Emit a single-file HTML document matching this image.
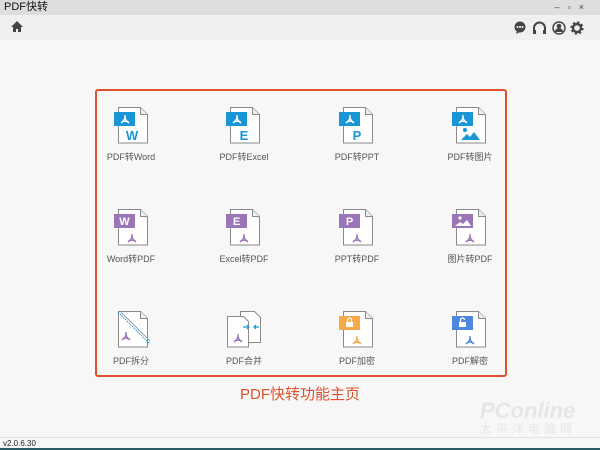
<!DOCTYPE html><html><head><meta charset="utf-8"><style>
*{margin:0;padding:0;box-sizing:border-box}
body{width:600px;height:450px;overflow:hidden;background:#f7f7f7;font-family:"Liberation Sans","Noto Sans CJK SC",sans-serif;position:relative}
.t{position:absolute;left:0;top:0;width:600px;height:15px;background:#dedede;font-size:11px;line-height:15px;padding-left:4px;color:#111}
.tb{position:absolute;left:0;top:15px;width:600px;height:25px;background:#f0f0f0}
.box{position:absolute;left:95px;top:89px;width:412px;height:288px;border:2px solid #e0502a;border-radius:3px}
.cap{position:absolute;left:0;width:600px;top:383px;text-align:center;color:#e0502a;font-size:15px}
.ic{position:absolute;width:40px;height:40px}
.lb{position:absolute;width:120px;text-align:center;font-size:9px;color:#555}
.st{position:absolute;left:0;top:437px;width:600px;height:13px;border-top:1px solid #e2e2e2;font-size:8px;color:#222;padding-left:3px;line-height:12px}
.bl{position:absolute;left:0;top:448px;width:600px;height:2px;background:#2b5c66}
</style></head><body>
<div class="t">PDF快转<span style="position:absolute;right:8px;top:0;font-size:9px;color:#444;letter-spacing:8px">–▫×</span></div>
<div class="tb">
<svg style="position:absolute;left:10px;top:5px" width="14" height="13" viewBox="0 0 14 13"><path d="M7 1L1 7h2v5h3V9h2v3h3V7h2z" fill="#444"/></svg>
<svg style="position:absolute;left:514px;top:6px" width="70" height="14" viewBox="0 0 70 14">
<circle cx="6" cy="6" r="5.5" fill="#444"/><path d="M3 10l-1 3 4-2z" fill="#444"/><circle cx="3.5" cy="6" r="1" fill="#fff"/><circle cx="6" cy="6" r="1" fill="#fff"/><circle cx="8.5" cy="6" r="1" fill="#fff"/>
<path d="M20 12V7a5.5 5.5 0 0 1 11 0v5" fill="none" stroke="#444" stroke-width="2"/><rect x="19" y="9" width="3" height="4" fill="#444"/><rect x="29" y="9" width="3" height="4" fill="#444"/>
<circle cx="45" cy="7" r="6" fill="none" stroke="#444" stroke-width="1.5"/><circle cx="45" cy="5" r="2.3" fill="#444"/><path d="M41 11a4 4 0 0 1 8 0z" fill="#444"/>
<circle cx="63" cy="7" r="4" fill="none" stroke="#444" stroke-width="2.4"/><circle cx="63" cy="7" r="5.6" fill="none" stroke="#444" stroke-width="2" stroke-dasharray="2.2 2.2"/>
</svg></div>
<div class="box"></div>
<svg width="0" height="0" style="position:absolute"><defs>
<path id="doc" d="M4.5 .5h22l7 7v28.5h-29z" fill="#fff" stroke="#8a8a8a"/>
<path id="fold" d="M26.5 .5v7h7" fill="#eee" stroke="#8a8a8a"/>
<path id="acr" d="M0 -4v2M0 -2c0 2.5-2.5 5-4 6M0 -2c0 2.5 2.5 5 4 6M-4 3.5c2.5-1.6 5.5-1.6 8 0" fill="none" stroke-width="1.4"/>
</defs></svg>
<svg class="ic" style="left:114px;top:107px" viewBox="0 0 40 40"><use href="#doc"/><use href="#fold"/><rect x="0" y="5" width="21" height="14" fill="#1a95d6"/><use href="#acr" x="11" y="12" stroke="#fff"/><text x="18" y="33" font-size="13" font-weight="bold" fill="#1a95d6" text-anchor="middle" font-family="Liberation Sans">W</text></svg>
<svg class="ic" style="left:226px;top:107px" viewBox="0 0 40 40"><use href="#doc"/><use href="#fold"/><rect x="0" y="5" width="21" height="14" fill="#1a95d6"/><use href="#acr" x="11" y="12" stroke="#fff"/><text x="18" y="33" font-size="13" font-weight="bold" fill="#1a95d6" text-anchor="middle" font-family="Liberation Sans">E</text></svg>
<svg class="ic" style="left:339px;top:107px" viewBox="0 0 40 40"><use href="#doc"/><use href="#fold"/><rect x="0" y="5" width="21" height="14" fill="#1a95d6"/><use href="#acr" x="11" y="12" stroke="#fff"/><text x="18" y="33" font-size="13" font-weight="bold" fill="#1a95d6" text-anchor="middle" font-family="Liberation Sans">P</text></svg>
<svg class="ic" style="left:452px;top:107px" viewBox="0 0 40 40"><use href="#doc"/><use href="#fold"/><rect x="0" y="5" width="21" height="14" fill="#1a95d6"/><use href="#acr" x="11" y="12" stroke="#fff"/><circle cx="13" cy="23" r="2" fill="#1a95d6"/><path d="M9 33l6-6 3 3 4-5 6 8z" fill="#1a95d6"/></svg>
<div class="lb" style="left:71px;top:150px">PDF转Word</div>
<div class="lb" style="left:184px;top:150px">PDF转Excel</div>
<div class="lb" style="left:297px;top:150px">PDF转PPT</div>
<div class="lb" style="left:410px;top:150px">PDF转图片</div>
<svg class="ic" style="left:114px;top:209px" viewBox="0 0 40 40"><use href="#doc"/><use href="#fold"/><rect x="0" y="5" width="21" height="14" fill="#9a76b8"/><text x="10.5" y="16" font-size="11" font-weight="bold" fill="#fff" text-anchor="middle" font-family="Liberation Sans">W</text><use href="#acr" x="18" y="29" stroke="#9a76b8"/></svg>
<svg class="ic" style="left:226px;top:209px" viewBox="0 0 40 40"><use href="#doc"/><use href="#fold"/><rect x="0" y="5" width="21" height="14" fill="#9a76b8"/><text x="10.5" y="16" font-size="11" font-weight="bold" fill="#fff" text-anchor="middle" font-family="Liberation Sans">E</text><use href="#acr" x="18" y="29" stroke="#9a76b8"/></svg>
<svg class="ic" style="left:339px;top:209px" viewBox="0 0 40 40"><use href="#doc"/><use href="#fold"/><rect x="0" y="5" width="21" height="14" fill="#9a76b8"/><text x="10.5" y="16" font-size="11" font-weight="bold" fill="#fff" text-anchor="middle" font-family="Liberation Sans">P</text><use href="#acr" x="18" y="29" stroke="#9a76b8"/></svg>
<svg class="ic" style="left:452px;top:209px" viewBox="0 0 40 40"><use href="#doc"/><use href="#fold"/><rect x="0" y="5" width="21" height="14" fill="#9a76b8"/><circle cx="8" cy="9" r="1.6" fill="#fff"/><path d="M3 17l5-4 3 2 4-4 4 6z" fill="#fff"/><use href="#acr" x="18" y="29" stroke="#9a76b8"/></svg>
<div class="lb" style="left:71px;top:252px">Word转PDF</div>
<div class="lb" style="left:184px;top:252px">Excel转PDF</div>
<div class="lb" style="left:297px;top:252px">PPT转PDF</div>
<div class="lb" style="left:410px;top:252px">图片转PDF</div>
<svg class="ic" style="left:114px;top:311px" viewBox="0 0 40 40"><use href="#doc"/><use href="#fold"/><path d="M4 1l32 32" stroke="#1a95d6" stroke-dasharray="1.5 1"/><path d="M7 1l29 29" stroke="#8a8a8a" stroke-width="0.8"/><use href="#acr" x="12" y="25" stroke="#9a76b8"/></svg>
<svg class="ic" style="left:226px;top:311px" viewBox="0 0 40 40"><path d="M14.5 .5h14l6 6v25h-20z" fill="#fff" stroke="#8a8a8a"/><path d="M1.5 5.5h16l5 5v25.5h-21z" fill="#fff" stroke="#8a8a8a"/><path d="M17 16h6M21 14l2 2-2 2M33 16h-5M30 14l-2 2 2 2" stroke="#1a95d6" fill="none" stroke-width="1.2"/><use href="#acr" x="12" y="27" stroke="#9a76b8"/></svg>
<svg class="ic" style="left:339px;top:311px" viewBox="0 0 40 40"><use href="#doc"/><use href="#fold"/><rect x="0" y="5" width="21" height="14" fill="#f8a94a"/><rect x="7" y="11" width="7" height="5" fill="#fff"/><path d="M8.5 11V9a2 2 0 0 1 4 0v2" fill="none" stroke="#fff" stroke-width="1.2"/><use href="#acr" x="18" y="29" stroke="#f8a94a"/></svg>
<svg class="ic" style="left:452px;top:311px" viewBox="0 0 40 40"><use href="#doc"/><use href="#fold"/><rect x="0" y="5" width="21" height="14" fill="#4f87e0"/><rect x="7" y="11" width="7" height="5" fill="#fff"/><path d="M8.5 11V9a2 2 0 0 1 4 0" fill="none" stroke="#fff" stroke-width="1.2"/><use href="#acr" x="18" y="29" stroke="#4f87e0"/></svg>
<div class="lb" style="left:71px;top:354px">PDF拆分</div>
<div class="lb" style="left:184px;top:354px">PDF合并</div>
<div class="lb" style="left:297px;top:354px">PDF加密</div>
<div class="lb" style="left:410px;top:354px">PDF解密</div>
<div class="cap">PDF快转功能主页</div>
<div style="position:absolute;left:480px;top:398px;font-size:22px;color:#e6e6e6;font-style:italic;font-weight:bold">PConline</div>
<div style="position:absolute;left:480px;top:420px;font-size:12px;color:#e6e6e6;letter-spacing:4px">太平洋电脑网</div>
<div class="st">v2.0.6.30</div>
<div class="bl"></div>
</body></html>
